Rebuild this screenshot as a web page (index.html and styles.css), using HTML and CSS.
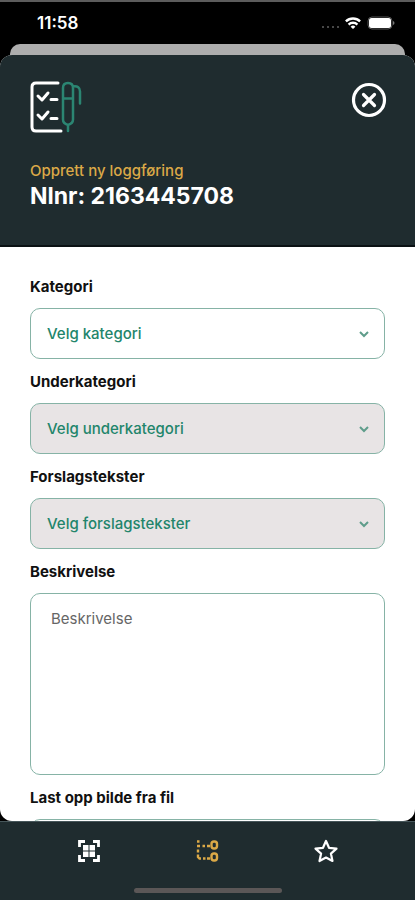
FILE: index.html
```html
<!DOCTYPE html>
<html lang="no">
<head>
<meta charset="utf-8">
<meta name="viewport" content="width=device-width, initial-scale=1">
<title>Opprett ny loggføring</title>
<link rel="stylesheet" href="styles.css">
</head>
<body>
<div class="app">
  <div class="status">
    <span class="time">11:58</span>
    <span class="signals">
      <span class="dots"><i></i><i></i><i></i><i></i></span>
      <svg width="16" height="12" viewBox="0 0 16 12" fill="none" stroke="#fff" stroke-width="2.4">
        <path d="M.9 4.4a10.2 10.2 0 0 1 14.2 0"/>
        <path d="M3.6 7.6a6.3 6.3 0 0 1 8.8 0"/>
        <path d="M8 12 5.6 9.7a3.4 3.4 0 0 1 4.8 0z" fill="#fff" stroke="none"/>
      </svg>
      <svg width="28" height="14" viewBox="0 0 28 14">
        <rect x="1" y="1" width="24" height="12" rx="4" fill="none" stroke="#555"/>
        <rect x="2" y="2" width="22" height="10" rx="2.5" fill="#fff"/>
        <path d="M26 5v4q1.500-.5 1.500-2T26 5" fill="#777"/>
      </svg>
    </span>
  </div>
  <div class="behind"></div>
  <main class="sheet">
    <header class="head">
      <div class="head-row">
        <svg class="logo" width="52" height="54" viewBox="0 0 52 54" fill="none" stroke-width="3" stroke-linecap="round" stroke-linejoin="round">
          <g stroke="#fff">
            <path d="M28 3H6Q2 3 2 7v40q0 4 4 4h25"/>
            <path d="m8 16 4 4 6-7M8 35l4 4 6-7M21 19.500h6M21 38.500h6"/>
          </g>
          <g stroke="#2b8572" stroke-width="2.500">
            <path d="M33 18.500v21q0 4 5 5.500 5-1.500 5-5.500V8q0-5-5-5t-5 5zM33 18.500h10M38 45v6M43 6.500q7-1 7 5v12"/>
          </g>
        </svg>
        <button class="close" type="button" aria-label="Lukk">
          <svg width="36" height="36" viewBox="0 0 36 36" fill="none" stroke="#fff" stroke-width="3.200" stroke-linecap="round">
            <circle cx="18" cy="18" r="15.500"/>
            <path d="m12.500 12.500 11 11m0-11-11 11"/>
          </svg>
        </button>
      </div>
      <p class="kicker">Opprett ny loggføring</p>
      <h1>Nlnr: 2163445708</h1>
    </header>
    <form class="form">
      <label for="kategori">Kategori</label>
      <div class="select">
        <select id="kategori"><option>Velg kategori</option></select>
        <svg width="12" height="8" viewBox="0 0 12 8"><path d="m2 2 4 4 4-4"/></svg>
      </div>
      <label for="under">Underkategori</label>
      <div class="select">
        <select id="under" disabled><option>Velg underkategori</option></select>
        <svg width="12" height="8" viewBox="0 0 12 8"><path d="m2 2 4 4 4-4"/></svg>
      </div>
      <label for="forslag">Forslagstekster</label>
      <div class="select">
        <select id="forslag" disabled><option>Velg forslagstekster</option></select>
        <svg width="12" height="8" viewBox="0 0 12 8"><path d="m2 2 4 4 4-4"/></svg>
      </div>
      <label for="beskrivelse">Beskrivelse</label>
      <textarea id="beskrivelse" placeholder="Beskrivelse"></textarea>
      <label for="fil">Last opp bilde fra fil</label>
      <input id="fil" class="file" type="text">
    </form>
  </main>
  <nav class="tabs">
    <div class="tab-row">
      <a href="#skann" aria-label="Skann">
        <svg width="24" height="24" viewBox="0 0 24 24">
          <path d="M2.500 8V2.500H8M16 2.500h5.500V8M21.500 16v5.500H16M8 21.500H2.500V16" fill="none" stroke="#fff" stroke-width="2.800"/>
          <path d="M6 6h5.500v5.500H6zM12.500 6H18v5.500h-5.500zM6 12.500h5.500V18H6zM12.500 12.500H18V18h-5.500z" fill="#fff"/>
        </svg>
      </a>
      <a href="#logg" aria-label="Logg">
        <svg width="24" height="24" viewBox="0 0 24 24" fill="none" stroke="#dba947" stroke-width="2.400">
          <path d="M2 2.500h2.500M2 7h3M7.500 7H10M12 7h3M3 10.500v3M3 15.500v2.500l1.500 1.500H6M8 19.500h2.500M12 19.500h3"/>
          <rect x="16.500" y="2.500" width="5.500" height="7" rx="2.500"/>
          <rect x="16.500" y="14.500" width="5.500" height="7" rx="2.500"/>
        </svg>
      </a>
      <a href="#favoritter" aria-label="Favoritter">
        <svg width="26" height="26" viewBox="0 0 26 26" fill="none" stroke="#fff" stroke-width="2.200" stroke-linejoin="round">
          <path d="m13 3 3 6.800 7.500.8-5.600 5 1.600 7.400-6.500-3.500L6.500 23l1.600-7.400-5.600-5 7.500-.8z"/>
        </svg>
      </a>
    </div>
    <div class="home"></div>
  </nav>
</div>
</body>
</html>
```
FILE: styles.css
```css
* { box-sizing: border-box; }
body { margin: 0; font-family: Inter, "Liberation Sans", sans-serif; background: #000; }
.app { height: 100vh; display: flex; flex-direction: column; border-top: 2px solid #5c5c5c; background: #000; }
.status { flex: none; height: 42px; display: flex; align-items: center; justify-content: space-between; padding: 0 20px 0 37px; color: #fff; }
.time { font-size: 17px; font-weight: 600; line-height: 20px; }
.signals { display: flex; align-items: center; gap: 6px; }
.dots { display: flex; gap: 3px; padding-top: 8px; }
.dots i { width: 2px; height: 2px; background: #484848; }
.behind { flex: none; height: 11px; margin: 0 10px; border-radius: 10px 10px 0 0; background: #adadad; }
.sheet { flex: 1; min-height: 0; display: flex; flex-direction: column; overflow: hidden; border-radius: 12px; background: #fff; }
.head { flex: none; height: 192px; padding: 25px 28px 0 30px; border-bottom: 2px solid #0b1214; background: #1f2c2f; }
.head-row { display: flex; justify-content: space-between; align-items: flex-start; }
.logo { display: block; }
.close { padding: 2px 0 0; border: 0; background: none; cursor: pointer; }
.close svg { display: block; }
.kicker { margin: 27px 0 0; font-size: 15px; font-weight: 500; line-height: 20px; color: #dba947; }
h1 { margin: 0; font-size: 23px; font-weight: 700; line-height: 30px; color: #fff; }
.form { flex: 1; min-height: 0; display: flex; flex-direction: column; padding: 30px 30px 0; }
label { flex: none; margin-bottom: 11px; font-size: 15px; font-weight: 700; line-height: 20px; color: #111; }
.select { flex: none; position: relative; margin-bottom: 13px; }
select, textarea, .file { display: block; width: 100%; border: 1px solid #86b3a6; border-radius: 10px; background: #fff; font: 500 15px/20px Inter, "Liberation Sans", sans-serif; }
select { height: 51px; padding: 0 16px; appearance: none; color: #22856b; opacity: 1; }
select:disabled { background: #e8e4e5; }
.select svg { position: absolute; right: 15px; top: 22px; fill: none; stroke: #5f9d8b; stroke-width: 2; pointer-events: none; }
textarea { flex: none; height: 182px; margin-bottom: 13px; padding: 15px 20px; resize: none; font-weight: 400; }
textarea::placeholder { color: #666; }
.file { flex: none; height: 51px; }
.tabs { flex: none; height: 79px; display: flex; flex-direction: column; align-items: center; justify-content: space-between; padding: 16px 30px 7px; border-top: 1px solid #46565a; background: #1f2c2f; }
.tab-row { width: 100%; display: grid; grid-template-columns: repeat(3, 1fr); justify-items: center; align-items: center; }
.tab-row a, .tab-row svg { display: block; }
.home { width: 148px; height: 5px; border-radius: 3px; background: #5b5757; }
```
